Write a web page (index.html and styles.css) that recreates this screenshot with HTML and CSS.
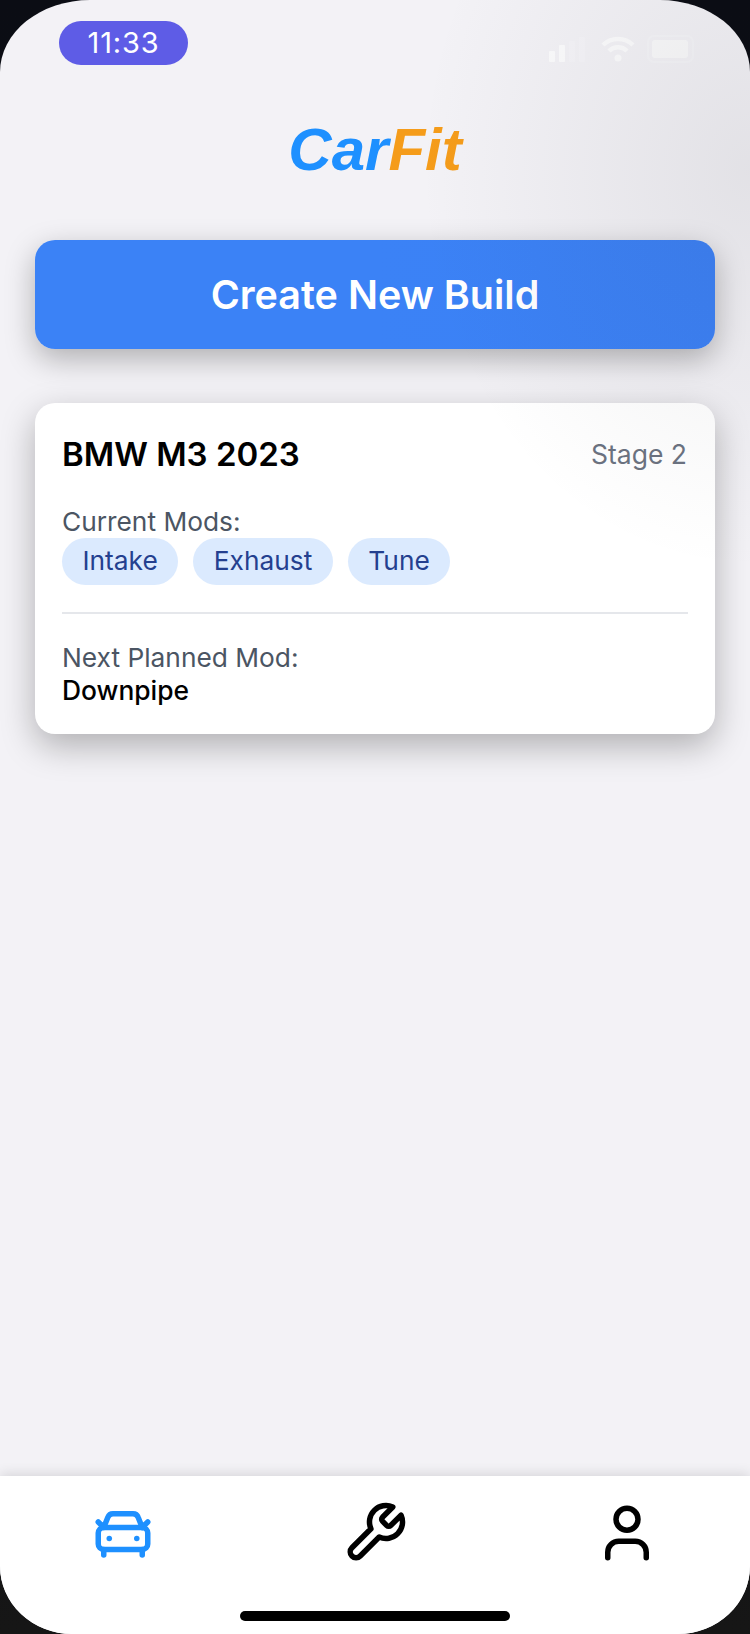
FILE: index.html
```html
<!DOCTYPE html>
<html lang="en">
<head>
<meta charset="utf-8">
<title>CarFit</title>
<link rel="stylesheet" href="styles.css">
</head>
<body>
<div class="screen">
  <div class="status">
    <div class="time">11:33</div>
    <div class="status-icons">
      <svg class="signal" width="40" height="26" viewBox="0 0 40 26" fill="#fff">
        <rect x="0" y="15" width="6" height="11" rx="1"/>
        <rect x="10" y="9" width="6" height="17" rx="1"/>
        <rect x="20" y="5" width="6" height="21" rx="1" opacity=".25"/>
        <rect x="30" y="1" width="6" height="25" rx="1" opacity=".25"/>
      </svg>
      <svg class="wifi" width="34" height="26" viewBox="0 0 34 26" fill="none" stroke="#fff" stroke-width="4.5">
        <path d="M2 9C10 1 24 1 32 9"/>
        <path d="M8 15c5-5 13-5 18 0"/>
        <circle cx="17" cy="22" r="3.5" fill="#fff" stroke="none"/>
      </svg>
      <svg class="battery" width="48" height="28" viewBox="0 0 48 28">
        <rect x="1" y="1" width="45" height="26" rx="6" fill="none" stroke="#fff" stroke-opacity=".3" stroke-width="2"/>
        <rect x="5" y="5" width="36" height="18" rx="3" fill="#fff" fill-opacity=".8"/>
      </svg>
    </div>
  </div>
  <h1 class="logo"><span class="logo-car">Car</span><span class="logo-fit">Fit</span></h1>
  <main class="content">
    <button class="create">Create New Build</button>
    <section class="card">
      <div class="card-head">
        <h2 class="card-title">BMW M3 2023</h2>
        <span class="stage">Stage 2</span>
      </div>
      <div class="label label-mods">Current Mods:</div>
      <div class="chips">
        <span class="chip">Intake</span>
        <span class="chip">Exhaust</span>
        <span class="chip">Tune</span>
      </div>
      <div class="divider"></div>
      <div class="label">Next Planned Mod:</div>
      <div class="next">Downpipe</div>
    </section>
  </main>
  <nav class="tabs">
    <svg class="tab tab-active" viewBox="0 0 24 24" fill="none" stroke="currentColor" stroke-width="2" stroke-linecap="round" stroke-linejoin="round">
      <path d="m21 8-2 2-1.5-3.7A2 2 0 0 0 15.646 5H8.4a2 2 0 0 0-1.903 1.257L5 10 3 8"/>
      <path d="M7 14h.01"/><path d="M17 14h.01"/>
      <rect width="18" height="8" x="3" y="10" rx="2"/>
      <path d="M5 18v2"/><path d="M19 18v2"/>
    </svg>
    <svg class="tab" viewBox="0 0 24 24" fill="none" stroke="currentColor" stroke-width="2" stroke-linecap="round" stroke-linejoin="round">
      <path d="M14.7 6.3a1 1 0 0 0 0 1.4l1.6 1.6a1 1 0 0 0 1.4 0l3.77-3.77a6 6 0 0 1-7.94 7.94l-6.91 6.91a2.12 2.12 0 0 1-3-3l6.91-6.91a6 6 0 0 1 7.94-7.94l-3.76 3.76z"/>
    </svg>
    <svg class="tab" viewBox="0 0 24 24" fill="none" stroke="currentColor" stroke-width="2" stroke-linecap="round" stroke-linejoin="round">
      <path d="M19 21v-2a4 4 0 0 0-4-4H9a4 4 0 0 0-4 4v2"/>
      <circle cx="12" cy="7" r="4"/>
    </svg>
    <div class="home"></div>
  </nav>
  <div class="sheen"></div>
</div>
</body>
</html>
```
FILE: styles.css
```css
* { box-sizing: border-box; }
html, body { margin: 0; padding: 0; }
body {
  width: 750px;
  height: 1634px;
  overflow: hidden;
  background: linear-gradient(#0b0d14, #0e0e12 50%, #161616);
  font-family: Inter, "Liberation Sans", sans-serif;
}
.screen {
  position: relative;
  width: 750px;
  height: 1634px;
  border-radius: 90px 90px 72px 72px / 72px 72px 68px 68px;
  overflow: hidden;
  background: #f3f2f6;
  display: flex;
  flex-direction: column;
}
.sheen {
  position: absolute;
  inset: 0 0 auto 0;
  height: 760px;
  pointer-events: none;
  background: radial-gradient(ellipse 330px 400px at 100% 170px, rgba(60,60,70,.09), rgba(60,60,70,0) 100%);
}
.status {
  flex: none;
  height: 65px;
  padding: 21px 55px 0 59px;
  display: flex;
  justify-content: space-between;
}
.time {
  width: 129px;
  height: 44px;
  border-radius: 22px;
  background: #5e5ce6;
  color: #fff;
  font-size: 29px;
  letter-spacing: .8px;
  line-height: 44px;
  text-align: center;
}
.status-icons {
  display: flex;
  align-items: center;
  gap: 12px;
  height: 44px;
  margin-top: 6px;
}
.signal, .wifi, .battery { opacity: .75; }
.logo {
  flex: none;
  margin: 42px 0 0;
  height: 85px;
  text-align: center;
  font: italic bold 60px/85px "Liberation Sans", Arial, sans-serif;
}
.logo-car { color: #1e90ff; }
.logo-fit { color: #f59c1a; }
.content {
  flex: 1;
  padding: 48px 35px 0 35px;
  display: flex;
  flex-direction: column;
  gap: 54px;
}
.create {
  height: 109px;
  border: 0;
  border-radius: 20px;
  background: linear-gradient(90deg, #3b82f6 50%, #3b80f5);
  color: #fff;
  font: 600 39.5px Inter, "Liberation Sans", sans-serif;
  box-shadow: 0 10px 30px rgba(0,0,0,.28);
}
.card {
  height: 331px;
  border-radius: 20px;
  background: #fff;
  padding: 29px 27px 0;
  box-shadow: 0 12px 34px rgba(0,0,0,.28);
}
.card-head {
  display: flex;
  justify-content: space-between;
  align-items: center;
  height: 44px;
  padding-right: 1px;
}
.card-title {
  margin: 0;
  font-size: 33px;
  font-weight: 600;
  color: #000;
}
.stage {
  font-size: 26.5px;
  color: #6b7280;
}
.label {
  font-size: 26.3px;
  line-height: 32px;
  color: #4b5563;
}
.label-mods { margin-top: 30px; }
.chips {
  display: flex;
  gap: 15px;
}
.chip {
  height: 47px;
  padding: 0 20.5px;
  border-radius: 24px;
  background: #dbeafe;
  color: #24408f;
  font-size: 26.3px;
  line-height: 46px;
}
.divider {
  height: 2px;
  background: #e5e7eb;
  margin: 27px 0 28px;
}
.next {
  font-size: 26.4px;
  font-weight: 500;
  line-height: 32px;
  color: #000;
}
.tabs {
  position: relative;
  flex: none;
  height: 158px;
  background: #fff;
  box-shadow: 0 -2px 12px rgba(0,0,0,.12);
  display: grid;
  grid-template-columns: repeat(3, 252px);
  justify-content: center;
  justify-items: center;
  align-items: start;
  padding-top: 24px;
}
.tab {
  width: 66px;
  height: 66px;
  color: #000;
}
.tab-active { color: #1e90ff; }
.home {
  position: absolute;
  left: 240px;
  bottom: 13px;
  width: 270px;
  height: 10px;
  border-radius: 5px;
  background: #000;
}
```
